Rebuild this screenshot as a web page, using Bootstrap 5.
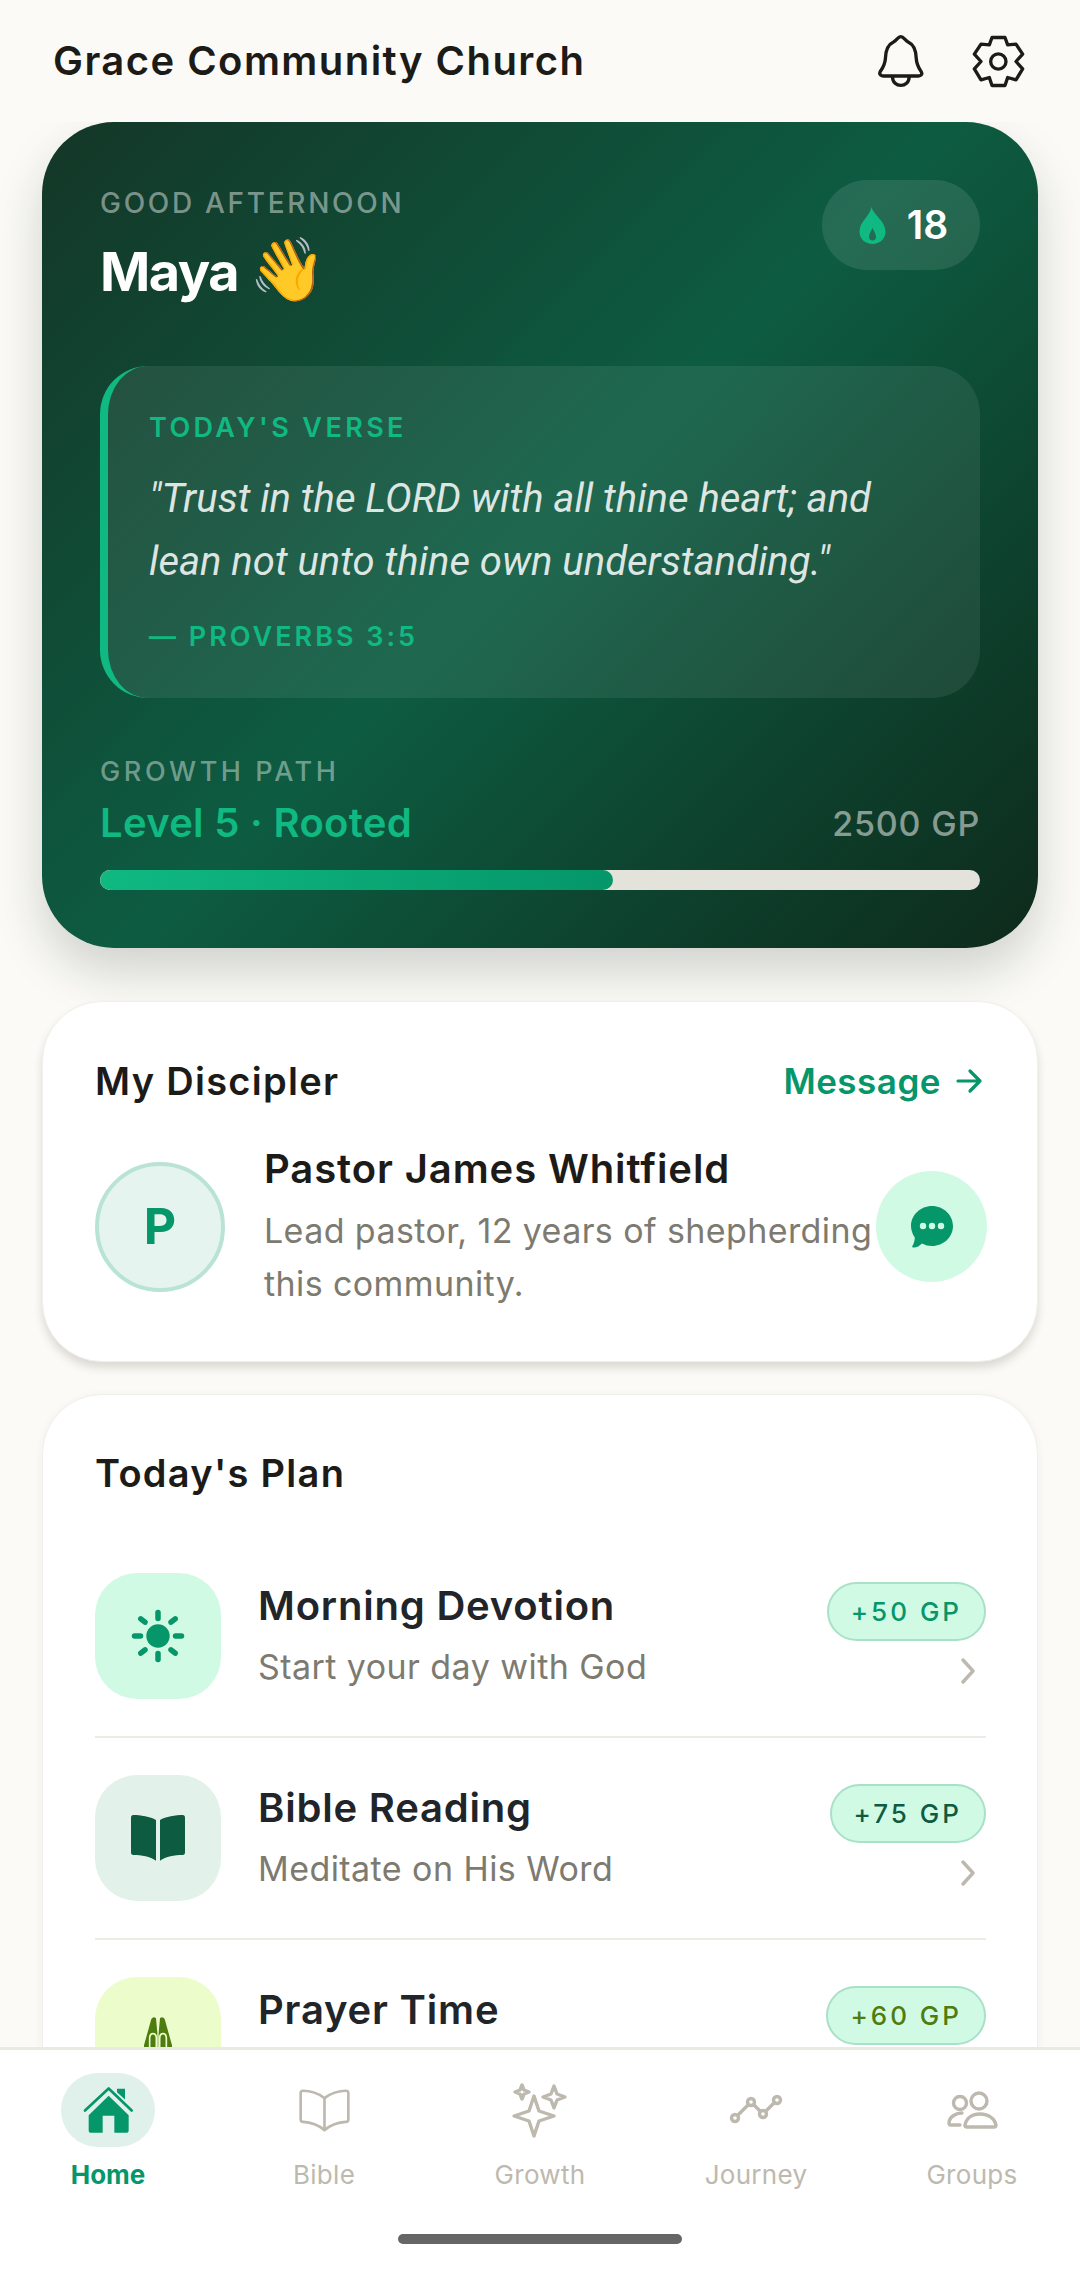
<!DOCTYPE html>
<html lang="en">
<head>
    <meta charset="UTF-8">
    <meta name="viewport" content="width=device-width, initial-scale=1">
    <title>Grace Community Church</title>
    <link href="https://cdn.jsdelivr.net/npm/bootstrap@5.3.0/dist/css/bootstrap.min.css" rel="stylesheet">
    <style>
        body { margin: 0; background: #fbfaf6; font-family: "Inter", "Noto Sans", sans-serif; color: #1c1b18; }
        .app-screen { width: 1080px; height: 2270px; overflow: hidden; }
        .app-head { height: 122px; padding: 0 42px 0 53px; background: #fbfaf6; z-index: 2; }
        .head-title { font-size: 40px; font-weight: 600; letter-spacing: 1.45px; margin: 0; }
        .head-icons { gap: 44px; margin-right: 12px; }
        .app-body { padding: 0 42px; min-height: 0; }

        .hero-card { height: 826px; padding: 58px; border: 0; border-radius: 72px; color: #fff;
            background: linear-gradient(135deg, #143627 0%, #0d5c42 50%, #0e2a1b 100%);
            box-shadow: 0 24px 48px rgba(20, 40, 30, .18); }
        .hero-top { height: 128px; margin-bottom: 58px; }
        .hello-label { font-size: 28px; line-height: 46px; font-weight: 500; letter-spacing: 2.7px; color: rgba(255, 255, 255, .45); }
        .hello-name { font-size: 54px; line-height: 72px; font-weight: 700; letter-spacing: -1.5px; margin-top: 10px; }
        .wave-emoji { font-size: 62px; line-height: 1; letter-spacing: 0; }
        .streak-pill { width: 158px; height: 90px; gap: 21px; padding-left: 5px; border-radius: 45px; background: rgba(255, 255, 255, .1); font-size: 39px; font-weight: 600; }
        .verse-box { height: 332px; padding: 47px 40px 46px 41px; border-left: 8px solid #10b981; border-radius: 48px; background: rgba(255, 255, 255, .08); }
        .verse-label { font-size: 27px; line-height: 30px; font-weight: 600; letter-spacing: 3.4px; color: #10b981; }
        .verse-text { font-family: "Roboto", "Inter", sans-serif; font-size: 40px; line-height: 63px; font-style: italic; font-weight: 400; color: rgba(255, 255, 255, .86); max-width: 760px; margin: 24px 0 0; }
        .verse-ref { font-size: 27px; line-height: 30px; font-weight: 600; letter-spacing: 3px; color: #10b981; margin-top: 29px; }
        .growth-label { font-size: 27px; line-height: 30px; font-weight: 500; letter-spacing: 3.6px; color: rgba(255, 255, 255, .42); margin-top: 59px; }
        .growth-row { line-height: 50px; margin-top: 9px; }
        .growth-level { font-size: 40px; font-weight: 600; letter-spacing: .3px; color: #10b981; }
        .growth-points { font-size: 34px; font-weight: 500; letter-spacing: .8px; color: rgba(255, 255, 255, .52); margin-top: 3px; }
        .growth-bar { height: 21px; margin-top: 21px; border-radius: 11px; background: #e3e2db; }
        .growth-bar .progress-bar { border-radius: 11px; background: linear-gradient(90deg, #10b981, #059669); }

        .sheet-card { padding: 0 51px 0 52px; border: 1px solid #f1efe9; border-radius: 60px; background: #fff; }
        .discipler-card { height: 361px; margin-top: 53px; padding-top: 53px; box-shadow: 0 6px 8px rgba(60, 55, 45, .16); }
        .plan-card { margin-top: 32px; padding-top: 53px; box-shadow: 0 2px 8px rgba(60, 55, 45, .06); }
        .sheet-title { font-size: 38px; line-height: 50px; font-weight: 600; letter-spacing: 1.3px; margin: 0; }
        .message-link { font-size: 35px; font-weight: 600; letter-spacing: .5px; color: #059669; text-decoration: none; gap: 14px; margin-right: 3px; }
        .discipler-row { margin-top: 36px; }
        .person-avatar { width: 130px; height: 130px; margin-right: 39px; border: 4px solid #b8e3d5; border-radius: 50%; background: #e6f4ef; color: #059669; font-size: 50px; font-weight: 700; }
        .person-name { font-size: 40px; line-height: 50px; font-weight: 600; letter-spacing: .9px; }
        .person-role { font-size: 34px; line-height: 53px; letter-spacing: .4px; color: #7d7a70; margin: 10px 0 0; }
        .chat-btn { width: 111px; height: 111px; margin: 0 -1px 0 0; padding: 0; border: 0; border-radius: 50%; background: #d1fae5; }

        .card > .plan-list { margin-top: 38px; border: 0; --bs-list-group-bg: transparent; --bs-list-group-border-color: #eeebe5; --bs-list-group-border-width: 2px; }
        .plan-item { padding: 37px 0; }
        .plan-tile { width: 126px; height: 126px; margin-right: 37px; border-radius: 42px; overflow: hidden; }
        .tile-mint { background: #d1fae5; }
        .tile-sage { background: #e3f1eb; }
        .tile-lime { background: #ecfccb; }
        .plan-name { font-size: 40px; line-height: 46px; font-weight: 600; letter-spacing: .8px; margin-top: 10px; }
        .plan-sub { font-size: 34px; line-height: 44px; letter-spacing: .44px; color: #7d7a70; margin-top: 16px; }
        .plan-side { padding-top: 9px; }
        .gp-chip { height: 59px; padding: 0 22px; border: 2px solid #a9e0c8; border-radius: 30px; background: #d1fae5; font-size: 26px; font-weight: 500; letter-spacing: 3px; }
        .chip-green { color: #059669; }
        .chip-dark { color: #0d5c42; }
        .chip-olive { color: #4d7c0f; }
        .plan-chevron { margin: 17px 10px 0 0; }

        .tab-bar { height: 223px; background: #fff; border-top: 3px solid #ece9e3; z-index: 2; }
        .tab-item { width: 216px; padding-top: 23px; color: #bdb9ae; font-size: 26px; line-height: 32px; letter-spacing: .3px; text-decoration: none; }
        .tab-icon { height: 74px; margin-bottom: 12px; flex-shrink: 0; }
        .tab-item.tab-current { color: #059669; font-weight: 700; letter-spacing: 0; }
        .tab-current .tab-icon { width: 94px; border-radius: 37px; background: #e0f1eb; }
        .home-bar { width: 284px; height: 10px; margin: 43px auto 0; border-radius: 5px; background: #666; }
    </style>
</head>
<body>

<div class="app-screen d-flex flex-column">
    <header class="app-head position-relative d-flex align-items-center justify-content-between flex-shrink-0">
        <h1 class="head-title">Grace Community Church</h1>
        <div class="head-icons d-flex align-items-center">
            <svg width="52" height="60" viewBox="100 60 155 180" fill="none" stroke="#1c1b18" stroke-width="10" stroke-linejoin="round" stroke-linecap="round"><path d="M177 77C168 77 165 88 155 93C140 100 132 115 131 140C130 162 122 172 115 182C111 190 118 195 125 195H230C237 195 243 190 238 182C231 172 224 162 223 140C222 115 214 100 199 93C189 88 186 77 177 77Z"/><path d="M152 197C152 232 202 232 202 197"/></svg>
            <svg width="55" height="57" viewBox="395 65 165 170" fill="none" stroke="#1c1b18" stroke-width="10" stroke-linejoin="round"><path d="M458 78H497L505 100L530 98L550 128L530 150L550 172L530 205L505 198L497 222H458L450 198L425 205L405 172L425 150L405 128L425 98L450 100Z"/><circle cx="477" cy="150" r="23"/></svg>
        </div>
    </header>

    <main class="app-body flex-grow-1 overflow-hidden">
        <section class="card hero-card">
            <div class="hero-top d-flex justify-content-between align-items-start">
                <div>
                    <div class="hello-label">GOOD AFTERNOON</div>
                    <div class="hello-name">Maya <span class="wave-emoji">👋</span></div>
                </div>
                <div class="streak-pill d-flex align-items-center justify-content-center">
                    <svg width="27" height="37" viewBox="0 0 26 37"><path fill="#10b981" fill-rule="evenodd" d="M12 0C14 8 26 14 26 25C26 32 20 37 13 37C6 37 0 32 0 25C0 14 10 10 12 0ZM13 21C11 25 9.5 27 9.5 30C9.5 32 11 33.5 13 33.5C15 33.5 16.5 32 16.5 30C16.5 27 15 25 13 21Z"/></svg>
                    <span>18</span>
                </div>
            </div>

            <div class="verse-box">
                <div class="verse-label">TODAY'S VERSE</div>
                <p class="verse-text">"Trust in the LORD with all thine heart; and lean not unto thine own understanding."</p>
                <div class="verse-ref">— PROVERBS 3:5</div>
            </div>

            <div class="growth-label">GROWTH PATH</div>
            <div class="growth-row d-flex justify-content-between align-items-center">
                <span class="growth-level">Level 5 · Rooted</span>
                <span class="growth-points">2500 GP</span>
            </div>
            <div class="progress growth-bar">
                <div class="progress-bar" style="width: 58.3%"></div>
            </div>
        </section>

        <section class="card sheet-card discipler-card">
            <div class="d-flex justify-content-between align-items-center">
                <h2 class="sheet-title">My Discipler</h2>
                <a class="message-link d-flex align-items-center" href="#">Message
                    <svg width="28" height="26" viewBox="0 0 28 26" fill="none" stroke="#059669" stroke-width="3.2" stroke-linecap="round" stroke-linejoin="round"><path d="M3 13H25M15 3L25 13L15 23"/></svg>
                </a>
            </div>
            <div class="discipler-row d-flex align-items-center">
                <div class="person-avatar d-flex align-items-center justify-content-center flex-shrink-0">P</div>
                <div class="flex-grow-1">
                    <div class="person-name">Pastor James Whitfield</div>
                    <p class="person-role">Lead pastor, 12 years of shepherding this community.</p>
                </div>
                <button class="btn chat-btn d-flex align-items-center justify-content-center flex-shrink-0" type="button">
                    <svg width="44" height="44" viewBox="0 0 44 44"><path fill="#059669" d="M22 1C33.5 1 43 10 43 21C43 32 33.5 41 22 41C18.500 41 15 40.200 12 38.500C9.500 41 6 43 3 42.500C2 42.300 2 41.500 2.500 40.800C4 38.500 4.800 35 4.800 32.500C2.500 29.200 1 25.200 1 21C1 10 10.500 1 22 1Z"/><circle cx="13" cy="21" r="3.200" fill="#d1fae5"/><circle cx="22" cy="21" r="3.200" fill="#d1fae5"/><circle cx="31" cy="21" r="3.200" fill="#d1fae5"/></svg>
                </button>
            </div>
        </section>

        <section class="card sheet-card plan-card">
            <h2 class="sheet-title">Today's Plan</h2>
            <ul class="list-group list-group-flush plan-list">
                <li class="list-group-item plan-item d-flex">
                    <div class="plan-tile tile-mint d-flex align-items-center justify-content-center flex-shrink-0">
                        <svg width="54" height="54" viewBox="0 0 54 54" fill="none" stroke="#059669" stroke-width="5.500" stroke-linecap="round"><circle cx="27" cy="27" r="11.700" fill="#059669" stroke="none"/><path d="M27 3.500V9.500M27 44.500V50.500M3.500 27H9.500M44.500 27H50.500M9.800 9.800L14 13.200M44.200 9.800L40 13.200M9.800 44.200L14 40.800M44.200 44.200L40 40.800"/></svg>
                    </div>
                    <div class="flex-grow-1">
                        <div class="plan-name">Morning Devotion</div>
                        <div class="plan-sub">Start your day with God</div>
                    </div>
                    <div class="plan-side d-flex flex-column align-items-end">
                        <span class="gp-chip chip-green d-flex align-items-center">+50 GP</span>
                        <svg class="plan-chevron" width="16" height="26" viewBox="0 0 16 26" fill="none" stroke="#bdb9ae" stroke-width="3.400" stroke-linecap="round" stroke-linejoin="round"><path d="M3 2L13 13L3 24"/></svg>
                    </div>
                </li>
                <li class="list-group-item plan-item d-flex">
                    <div class="plan-tile tile-sage d-flex align-items-center justify-content-center flex-shrink-0">
                        <svg width="54" height="46" viewBox="153 760 162 138" fill="#0d5c42"><path d="M228 775C212 765 180 760 160 760Q153 760 153 768V872Q153 880 160 880C185 880 210 885 228 897Z"/><path d="M240 775C256 765 288 760 308 760Q315 760 315 768V872Q315 880 308 880C283 880 258 885 240 897Z"/></svg>
                    </div>
                    <div class="flex-grow-1">
                        <div class="plan-name">Bible Reading</div>
                        <div class="plan-sub">Meditate on His Word</div>
                    </div>
                    <div class="plan-side d-flex flex-column align-items-end">
                        <span class="gp-chip chip-dark d-flex align-items-center">+75 GP</span>
                        <svg class="plan-chevron" width="16" height="26" viewBox="0 0 16 26" fill="none" stroke="#bdb9ae" stroke-width="3.400" stroke-linecap="round" stroke-linejoin="round"><path d="M3 2L13 13L3 24"/></svg>
                    </div>
                </li>
                <li class="list-group-item plan-item d-flex">
                    <div class="plan-tile tile-lime d-flex align-items-center justify-content-center flex-shrink-0">
                        <svg width="28" height="46" viewBox="192 1372 84 138"><path fill="#4d7c0f" d="M214 1378Q221 1368 228 1376L232 1420V1500H180ZM254 1378Q247 1368 240 1376L236 1420V1500H288Z"/><path fill="none" stroke="#ecfccb" stroke-width="5" d="M209 1470V1436Q209 1422 219 1422Q229 1422 229 1436V1470M239 1470V1436Q239 1422 249 1422Q259 1422 259 1436V1470"/></svg>
                    </div>
                    <div class="flex-grow-1">
                        <div class="plan-name">Prayer Time</div>
                    </div>
                    <div class="plan-side d-flex flex-column align-items-end">
                        <span class="gp-chip chip-olive d-flex align-items-center">+60 GP</span>
                    </div>
                </li>
            </ul>
        </section>
    </main>

    <nav class="tab-bar position-relative flex-shrink-0">
        <div class="d-flex">
            <a class="tab-item tab-current d-flex flex-column align-items-center" href="#">
                <span class="tab-icon d-flex align-items-center justify-content-center">
                    <svg width="55" height="52" viewBox="60 70 165 155"><path fill="none" stroke="#059669" stroke-width="8" stroke-linecap="round" stroke-linejoin="round" d="M72 149L143 83L212 149"/><path fill="#059669" d="M168 84H192V116L168 94ZM83 163L143 105L203 163V208Q203 216 195 216H160V165H125V216H91Q83 216 83 208Z"/></svg>
                </span>
                Home
            </a>
            <a class="tab-item d-flex flex-column align-items-center" href="#">
                <span class="tab-icon d-flex align-items-center justify-content-center">
                    <svg width="53" height="45" viewBox="710 80 160 135" fill="none" stroke="#bdb9ae" stroke-width="8" stroke-linejoin="round"><path d="M790 110C770 95 745 88 725 88Q718 88 718 95V175Q718 182 725 182C750 183 770 190 790 207C810 190 830 183 855 182Q862 182 862 175V95Q862 88 855 88C835 88 810 95 790 110ZM790 110V207"/></svg>
                </span>
                Bible
            </a>
            <a class="tab-item d-flex flex-column align-items-center" href="#">
                <span class="tab-icon d-flex align-items-center justify-content-center">
                    <svg width="70" height="60" viewBox="5 0 70 60" fill="none" stroke="#bdb9ae" stroke-width="3.400" stroke-linejoin="round"><path d="M34 16L39 31L54 36L39 41L34 56L29 41L14 36L29 31Z"/><path d="M22 5L24 10L29 12L24 14L22 19L20 14L15 12L20 10Z"/><path d="M54 6L57 14L65 17L57 20L54 28L51 20L43 17L51 14Z"/></svg>
                </span>
                Growth
            </a>
            <a class="tab-item d-flex flex-column align-items-center" href="#">
                <span class="tab-icon d-flex align-items-center justify-content-center">
                    <svg width="70" height="40" viewBox="0 0 70 40" fill="none" stroke="#bdb9ae" stroke-width="3.400"><path d="M16 26L28 14M33 15L40 22M44 22L54 12"/><circle cx="14" cy="28" r="3.500"/><circle cx="30" cy="12" r="3.500"/><circle cx="42" cy="24" r="3.500"/><circle cx="56" cy="10" r="3.500"/></svg>
                </span>
                Journey
            </a>
            <a class="tab-item d-flex flex-column align-items-center" href="#">
                <span class="tab-icon d-flex align-items-center justify-content-center">
                    <svg width="56" height="42" viewBox="0 0 56 42" fill="none" stroke="#bdb9ae" stroke-width="3.400" stroke-linecap="round"><circle cx="16" cy="14" r="6.500"/><circle cx="35" cy="12" r="8"/><path d="M21 38C21 30 27 25 36 25C45 25 51 30 52 36Q52 38 50 38H23Q21 38 21 36Z"/><path d="M18 24C12 24 5 28 5 34Q5 36 7 36H16"/></svg>
                </span>
                Groups
            </a>
        </div>
        <div class="home-bar"></div>
    </nav>
</div>

<script src="https://cdn.jsdelivr.net/npm/bootstrap@5.3.0/dist/js/bootstrap.bundle.min.js"></script>
</body>
</html>
